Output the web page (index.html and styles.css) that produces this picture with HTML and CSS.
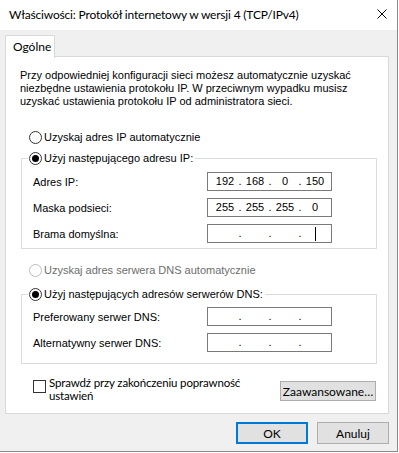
FILE: index.html
```html
<!DOCTYPE html>
<html lang="pl">
<head>
<meta charset="utf-8">
<title>Właściwości: Protokół internetowy w wersji 4 (TCP/IPv4)</title>
<link rel="stylesheet" href="styles.css">
</head>
<body>
<div class="window">
  <div class="titlebar">
    <span class="title">Właściwości: Protokół internetowy w wersji 4 (TCP/IPv4)</span>
    <span class="close"><svg width="10" height="10" viewBox="0 0 10 10"><path d="M0.5 0.5 L9.5 9.5 M9.5 0.5 L0.5 9.5" stroke="#000" stroke-width="1" fill="none"/></svg></span>
  </div>
  <div class="content">
    <div class="tabs"><div class="tab">Ogólne</div></div>
    <div class="panel">
      <p class="intro">Przy odpowiedniej konfiguracji sieci możesz automatycznie uzyskać<br>niezbędne ustawienia protokołu IP. W przeciwnym wypadku musisz<br>uzyskać ustawienia protokołu IP od administratora sieci.</p>

      <div class="radio-row first"><span class="radio"></span><span>Uzyskaj adres IP automatycznie</span></div>

      <div class="group g1">
        <div class="group-head"><span class="radio checked"></span><span>Użyj następującego adresu IP:</span></div>
        <div class="rows">
          <div class="row"><span class="label">Adres IP:</span>
            <div class="ip"><span class="seg">192</span><span class="dot">.</span><span class="seg">168</span><span class="dot">.</span><span class="seg">0</span><span class="dot">.</span><span class="seg">150</span></div></div>
          <div class="row"><span class="label">Maska podsieci:</span>
            <div class="ip"><span class="seg">255</span><span class="dot">.</span><span class="seg">255</span><span class="dot">.</span><span class="seg">255</span><span class="dot">.</span><span class="seg">0</span></div></div>
          <div class="row"><span class="label">Brama domyślna:</span>
            <div class="ip"><span class="seg"></span><span class="dot">.</span><span class="seg"></span><span class="dot">.</span><span class="seg"></span><span class="dot">.</span><span class="seg"><span class="caret"></span></span></div></div>
        </div>
      </div>

      <div class="radio-row disabled"><span class="radio"></span><span>Uzyskaj adres serwera DNS automatycznie</span></div>

      <div class="group g2">
        <div class="group-head"><span class="radio checked"></span><span>Użyj następujących adresów serwerów DNS:</span></div>
        <div class="rows">
          <div class="row"><span class="label">Preferowany serwer DNS:</span>
            <div class="ip"><span class="seg"></span><span class="dot">.</span><span class="seg"></span><span class="dot">.</span><span class="seg"></span><span class="dot">.</span><span class="seg"></span></div></div>
          <div class="row"><span class="label">Alternatywny serwer DNS:</span>
            <div class="ip"><span class="seg"></span><span class="dot">.</span><span class="seg"></span><span class="dot">.</span><span class="seg"></span><span class="dot">.</span><span class="seg"></span></div></div>
        </div>
      </div>

      <div class="bottom-row">
        <span class="checkbox"></span>
        <span class="check-text">Sprawdź przy zakończeniu poprawność<br>ustawień</span>
        <button class="btn adv">Zaawansowane…</button>
      </div>
    </div>
    <div class="buttons">
      <button class="btn ok">OK</button>
      <button class="btn cancel">Anuluj</button>
    </div>
  </div>
</div>
</body>
</html>
```
FILE: styles.css
```css
* { box-sizing: border-box; }
html, body { margin: 0; padding: 0; background: #fff; }
body {
  width: 399px; height: 453px; overflow: hidden;
  font-family: "Liberation Sans", Arial, sans-serif;
  font-size: 11px; color: #000;
}
.window {
  width: 398px; height: 452px;
  border-right: 1px solid #8a8a8a;
  border-bottom: 1px solid #8a8a8a;
  background: #f0f0f0;
  display: flex; flex-direction: column;
}
.titlebar {
  height: 30px; flex: none; background: #fff;
  display: flex; align-items: center; justify-content: space-between;
  padding-left: 9px;
}
.title { font-family: Lato, sans-serif; font-size: 12px; letter-spacing: -0.18px; padding-bottom: 1px; }
.close { width: 30px; height: 30px; display: flex; align-items: center; justify-content: center; padding-bottom: 3px; }
.content { flex: 1; padding: 5px 8px 0 5px; display: flex; flex-direction: column; }
.tabs { display: flex; height: 22px; position: relative; z-index: 1; margin-bottom: -1px; }
.tab {
  width: 50px; height: 23px; background: #fff;
  border: 1px solid #d9d9d9; border-bottom: none;
  font-family: Lato, sans-serif; font-size: 12px;
  padding: 3px 0 0 7px;
}
.panel {
  width: 384px; height: 358px; background: #fff;
  border: 1px solid #d9d9d9;
  display: flex; flex-direction: column;
}
.intro { margin: 0; padding: 12px 0 0 14px; line-height: 13px; white-space: nowrap; }
.radio-row { display: flex; align-items: center; height: 16px; gap: 2px; white-space: nowrap; }
.radio-row.first { margin: 21px 0 0 23px; }
.radio-row.disabled { margin: 13px 0 0 23px; color: #6d6d6d; }
.radio {
  width: 13px; height: 13px; border-radius: 50%;
  border: 1px solid #333; background: #fff;
  display: flex; align-items: center; justify-content: center; flex: none;
}
.radio.checked::after { content: ""; width: 7px; height: 7px; border-radius: 50%; background: #000; }
.disabled .radio { border-color: #bcbcbc; }
.group {
  margin-left: 15px; width: 356px;
  border: 1px solid #dcdcdc;
  display: flex; flex-direction: column;
}
.g1 { margin-top: 13px; padding-bottom: 5px; }
.g2 { margin-top: 16px; padding-bottom: 11px; }
.group-head {
  margin: -9px 0 0 6px; align-self: flex-start;
  display: flex; align-items: center; gap: 2px; height: 16px;
  background: #fff; padding: 0 2px 0 1px; white-space: nowrap;
}
.rows { display: flex; flex-direction: column; gap: 7px; padding-left: 11px; }
.g1 .rows { margin-top: 6px; }
.g2 .rows { margin-top: 5px; }
.row { display: flex; align-items: center; height: 19px; }
.label { width: 174px; flex: none; }
.ip {
  width: 125px; height: 19px; border: 1px solid #7a7a7a;
  display: flex; align-items: center; padding-left: 4px; line-height: 13px;
}
.seg { width: 26px; text-align: center; display: flex; justify-content: center; }
.dot { width: 4px; text-align: center; }
.caret { width: 1px; height: 14px; background: #000; display: block; }
.bottom-row { display: flex; align-items: flex-start; margin-top: 14px; padding-left: 27px; }
.checkbox { width: 13px; height: 13px; border: 1px solid #333; margin-top: 2px; flex: none; }
.check-text { font-family: Lato, sans-serif; font-size: 11.5px; line-height: 13px; margin: -2px 0 0 3px; flex: 1; white-space: nowrap; letter-spacing: -0.15px; }
.btn {
  font-family: Lato, sans-serif; font-size: 12px; color: #000;
  background: #e1e1e1; border: 1px solid #adadad; padding: 0; margin: 0;
}
.adv { width: 96px; height: 20px; margin: 3px 12px 0 0; }
.buttons { display: flex; justify-content: flex-end; gap: 9px; margin-top: 8px; }
.ok, .cancel { width: 72px; height: 22px; }
.ok { border: 2px solid #0078d7; }
```
